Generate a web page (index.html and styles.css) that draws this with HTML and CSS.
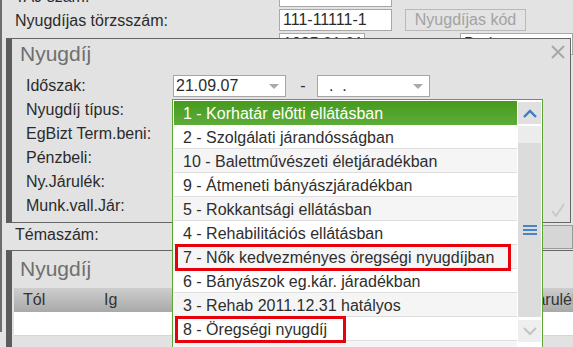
FILE: index.html
```html
<!DOCTYPE html>
<html lang="hu">
<head>
<meta charset="utf-8">
<title>Nyugdíj</title>
<link rel="stylesheet" href="styles.css">
</head>
<body>
<div class="page">
  <div class="form">
    <div class="row"><span class="lbl">TAJ szám:</span><div class="inp w113"></div></div>
    <div class="row"><span class="lbl">Nyugdíjas törzsszám:</span><div class="inp w113">111-11111-1</div><div class="btn">Nyugdíjas kód</div></div>
    <div class="row"><span class="lbl">Nyugdíjas kezdete:</span><div class="inp w86">1985.01.01</div><span class="lbl2">Kiállítás:</span><div class="inp grow">Budapest</div></div>
    <div class="filler"></div>
    <div class="row"><span class="lbl">Témaszám:</span><div class="inp grow dis"></div></div>
  </div>
</div>

<div class="dialog d1">
  <div class="dlg-head">
    <span class="dlg-title">Nyugdíj</span>
    <svg class="close" width="14" height="14" viewBox="0 0 14 14"><path d="M1 1 L13 13 M13 1 L1 13" stroke="#a8a8a8" stroke-width="2" fill="none"/></svg>
  </div>
  <div class="dlg-form">
    <div class="frow">
      <span class="flabel">Időszak:</span>
      <div class="combo"><span>21.09.07</span><i class="arrow"></i></div>
      <span class="dash">-</span>
      <div class="combo"><span class="mask">  .  .  </span><i class="arrow"></i></div>
    </div>
    <div class="frow"><span class="flabel">Nyugdíj típus:</span></div>
    <div class="frow"><span class="flabel">EgBizt Term.beni:</span></div>
    <div class="frow"><span class="flabel">Pénzbeli:</span></div>
    <div class="frow"><span class="flabel">Ny.Járulék:</span></div>
    <div class="frow">
      <span class="flabel">Munk.vall.Jár:</span>
      <svg class="check" width="14" height="14" viewBox="0 0 14 14"><path d="M1 8 L5 13 L13 1" stroke="#c6c6c6" stroke-width="1.6" fill="none"/></svg>
    </div>
  </div>
</div>

<div class="dialog d2">
  <div class="dlg-head d2head"><span class="dlg-title">Nyugdíj</span></div>
  <div class="thead">
    <span class="th c1">Tól</span>
    <span class="th c2">Ig</span>
    <span class="th last">Ny.Járulék</span>
  </div>
  <div class="trow"></div>
</div>

<div class="dropdown">
  <div class="list">
    <div class="opt sel">1 - Korhatár előtti ellátásban</div>
    <div class="opt">2 - Szolgálati járandósságban</div>
    <div class="opt">10 - Balettművészeti életjáradékban</div>
    <div class="opt">9 - Átmeneti bányászjáradékban</div>
    <div class="opt">5 - Rokkantsági ellátásban</div>
    <div class="opt">4 - Rehabilitációs ellátásban</div>
    <div class="opt">7 - Nők kedvezményes öregségi nyugdíjban</div>
    <div class="opt">6 - Bányászok eg.kár. járadékban</div>
    <div class="opt">3 - Rehab 2011.12.31 hatályos</div>
    <div class="opt">8 - Öregségi nyugdíj</div>
    <div class="opt"></div>
  </div>
  <div class="sb">
    <div class="sb-btn up"><svg width="14" height="9" viewBox="0 0 14 9"><polyline points="1,8 7,2 13,8" stroke="#3d7cc0" stroke-width="2.4" fill="none"/></svg></div>
    <div class="sb-track"></div>
    <div class="sb-thumb"><svg width="14" height="10" viewBox="0 0 14 10"><path d="M0 1 H14 M0 5 H14 M0 9 H14" stroke="#4a84c4" stroke-width="2" fill="none"/></svg></div>
    <div class="sb-btn down"><svg width="14" height="9" viewBox="0 0 14 9"><polyline points="1,1 7,7 13,1" stroke="#c4c4c4" stroke-width="2" fill="none"/></svg></div>
  </div>
</div>

<div class="mark mark1"></div>
<div class="mark mark2"></div>
</body>
</html>
```

FILE: styles.css
```css
html, body {
  margin: 0;
  padding: 0;
}
body {
  width: 573px;
  height: 347px;
  overflow: hidden;
  position: relative;
  background: #e3e3e3;
  font-family: "Liberation Sans", Arial, sans-serif;
  font-size: 16px;
  color: #2b2b2b;
}

.page {
  height: 347px;
  border-left: 2px solid #6d6d6d;
  box-sizing: border-box;
}
.form {
  margin-top: -15px;
}
.row {
  display: flex;
  height: 24px;
  line-height: 24px;
}
.lbl {
  flex: none;
  width: 277px;
  padding-left: 13px;
  box-sizing: border-box;
  white-space: nowrap;
}
.lbl2 {
  flex: none;
  width: 95px;
  padding-left: 14px;
  box-sizing: border-box;
}
.inp {
  flex: none;
  box-sizing: border-box;
  height: 22px;
  border: 1px solid #a8a8a8;
  background: #fff;
  line-height: 20px;
  padding: 0 3px;
  white-space: nowrap;
  overflow: hidden;
}
.w113 { width: 113px; }
.w86 { width: 86px; }
.grow { flex: 1; }
.dis {
  height: 24px;
  margin-top: 2px;
  background: #d6d6d6;
  border-color: #9a9a9a;
}
.btn {
  flex: none;
  box-sizing: border-box;
  width: 121px;
  height: 22px;
  margin-left: 13px;
  border: 1px solid #b9b9b9;
  background: #e3e3e3;
  color: #a2a2a2;
  line-height: 20px;
  text-align: center;
}
.filler {
  height: 166px;
}

/* dialogs */
.dialog {
  position: absolute;
  box-sizing: border-box;
  background: #e2e2e2;
  border: 1px solid #666;
  border-left: 6px solid #5c5c5c;
}
.d1 {
  left: 6px;
  top: 38px;
  width: 565px;
  height: 185px;
}
.d2 {
  left: 6px;
  top: 250px;
  width: 590px;
  height: 120px;
  border-right: none;
  border-bottom: none;
}
.dlg-head {
  display: flex;
  justify-content: space-between;
  align-items: flex-start;
  padding: 3px 5px 0 8px;
  height: 27px;
  box-sizing: border-box;
}
.dlg-title {
  font-size: 21px;
  line-height: 24px;
  color: #6f6f6f;
}
.close {
  margin-top: 3px;
}
.dlg-form {
  padding: 8px 5px 4px 14px;
}
.frow {
  display: flex;
  height: 24px;
  line-height: 24px;
}
.flabel {
  flex: none;
  width: 147px;
  white-space: nowrap;
}
.combo {
  flex: none;
  box-sizing: border-box;
  width: 113px;
  height: 22px;
  margin-top: 1px;
  border: 1px solid #a5a5a5;
  background: #fff;
  display: flex;
  align-items: center;
  justify-content: space-between;
  padding: 0 6px 0 2px;
  line-height: 20px;
}
.mask {
  white-space: pre;
}
.arrow {
  display: block;
  width: 0;
  height: 0;
  border-left: 5px solid transparent;
  border-right: 5px solid transparent;
  border-top: 5px solid #a9a9a9;
}
.dash {
  flex: none;
  width: 31px;
  text-align: center;
  padding-left: 3px;
  box-sizing: border-box;
}
.check {
  margin-left: auto;
  margin-top: 9px;
}

.d2head {
  padding-top: 6px;
  height: 31px;
}
.thead {
  display: flex;
  margin: 6px 0 0 2px;
  height: 24px;
  line-height: 24px;
  padding: 0 16px 0 9px;
  background: linear-gradient(#cdcdcd, #a9a9a9);
  color: #333;
}
.th.c1 { width: 81px; }
.th.last { margin-left: auto; }
.trow {
  margin-left: 2px;
  height: 24px;
  box-sizing: border-box;
  background: #fff;
  border-bottom: 1px solid #d6d6d6;
}

/* dropdown */
.dropdown {
  position: absolute;
  left: 172px;
  top: 99px;
  width: 371px;
  height: 262px;
  box-sizing: border-box;
  border: 1px solid #5aa634;
  background: #fff;
  padding: 1px;
  display: flex;
  gap: 1px;
}
.list {
  width: 343px;
  flex: none;
}
.opt {
  height: 24px;
  box-sizing: border-box;
  border-bottom: 1px solid #dedede;
  line-height: 26px;
  padding-left: 9px;
  white-space: nowrap;
  color: #2e2e2e;
}
.opt:nth-child(odd) {
  background: #f5f5f5;
}
.opt.sel {
  background: linear-gradient(#479a1d, #5cab37);
  color: #fff;
  border-bottom-color: #5cab37;
}
.sb {
  width: 23px;
  flex: none;
  display: flex;
  flex-direction: column;
}
.sb-btn {
  height: 22px;
  display: flex;
  align-items: center;
  justify-content: center;
}
.sb-btn.up {
  margin-top: 1px;
  background: #e0e0e0;
}
.sb-btn.down {
  margin-top: 3px;
  background: #eeeeee;
}
.sb-track {
  margin-top: 2px;
  height: 17px;
  background: #ececec;
}
.sb-thumb {
  height: 174px;
  background: #dcdcdc;
  display: flex;
  align-items: center;
  justify-content: center;
}

.mark {
  position: absolute;
  box-sizing: border-box;
  border: 3px solid #e8000b;
}
.mark1 {
  left: 175px;
  top: 244px;
  width: 336px;
  height: 27px;
}
.mark2 {
  left: 175px;
  top: 316px;
  width: 171px;
  height: 27px;
}
```
